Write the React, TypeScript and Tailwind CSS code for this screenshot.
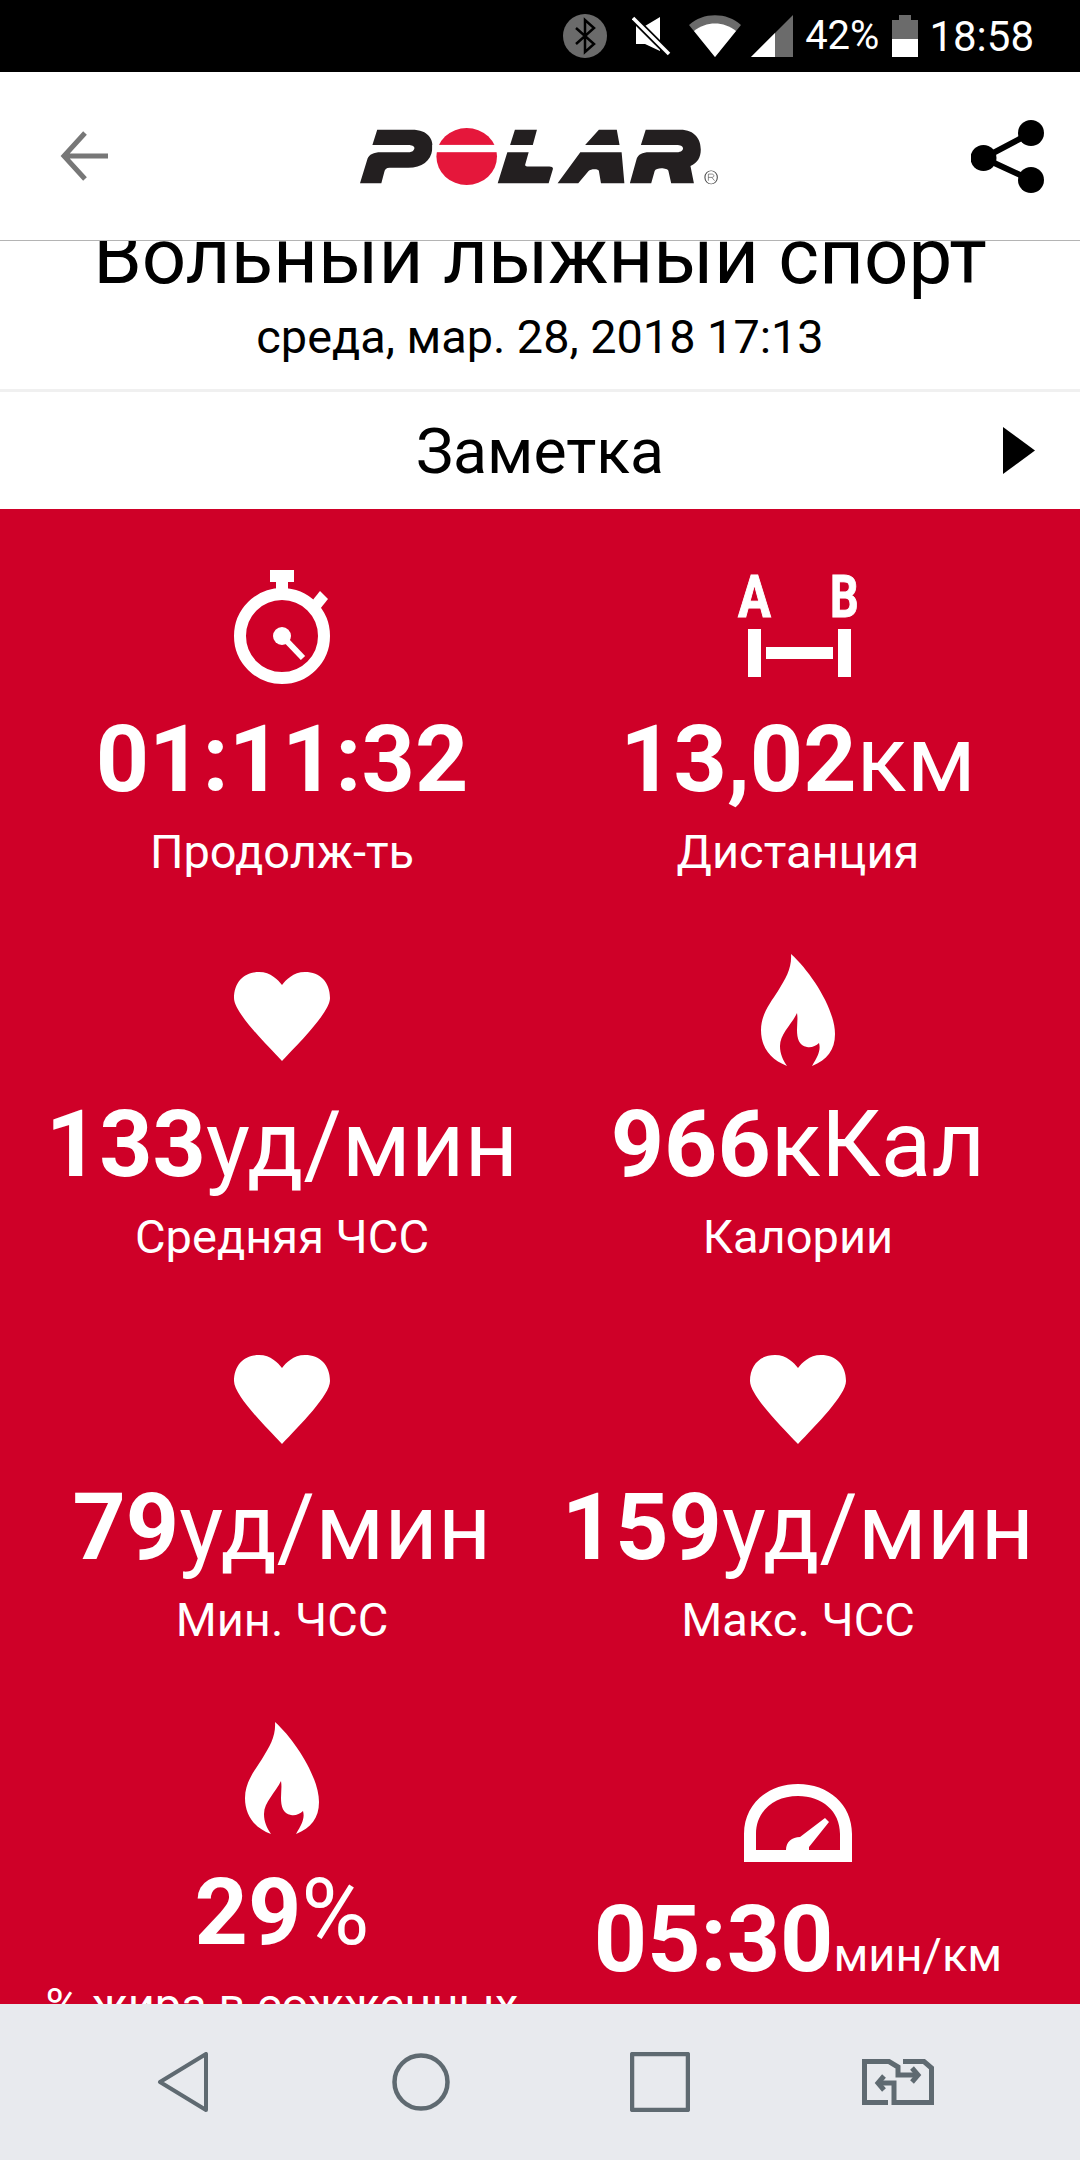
import type { ReactNode } from "react"

function StatusIcons() {
  return (
    <>
      <svg width="44" height="44" viewBox="0 0 44 44" className="mr-[25px]">
        <circle cx="22" cy="22" r="22" fill="#6b6b6b" />
        <path d="M13 14 L31 30 L22 38 V6 L31 14 L13 30" fill="none" stroke="#000" strokeWidth="2.5" />
      </svg>
      <svg width="40" height="40" viewBox="0 0 40 40" className="mr-[17px]">
        <path d="M4 10 H13 L28 1 V35 L13 28 H4 Z" fill="#fff" />
        <path d="M1 2 L37 38" stroke="#000" strokeWidth="7" />
        <path d="M1 2 L37 38" stroke="#fff" strokeWidth="3.5" />
      </svg>
      <svg width="52" height="42" viewBox="0 0 52 42" className="mr-[10px]">
        <path d="M0 10 C14 -3 38 -3 52 10 L26 42 Z" fill="#6b6b6b" />
        <path d="M5 16 C17 6 35 6 47 16 L26 42 Z" fill="#fff" />
      </svg>
      <svg width="42" height="42" viewBox="0 0 42 42" className="mr-[12px]">
        <path d="M0 42 L42 0 V42 Z" fill="#6b6b6b" />
        <path d="M0 42 L24 18 V42 Z" fill="#fff" />
      </svg>
    </>
  )
}

function Battery() {
  return (
    <svg width="26" height="42" viewBox="0 0 26 42" className="ml-[13px] mr-[11px]">
      <path d="M7 0 H19 V5 H26 V42 H0 V5 H7 Z" fill="#6b6b6b" />
      <rect x="0" y="24" width="26" height="18" fill="#fff" />
    </svg>
  )
}

function Logo() {
  return (
    <svg width="358" height="57" viewBox="525 170 520 172" preserveAspectRatio="none" className="-ml-[6px]">
      <g fill="#231f20">
        <path d="M550 175 H600 C625 175 632 205 630 235 C628 270 615 290 595 290 H568 C563 290 561 295 560 305 L556 337 H525 L536 262 C538 250 545 243 555 243 H595 C602 243 604 235 604 230 C604 224 600 221 595 221 H543 Z" />
        <path d="M750 175 H782 L776 221 H743 Z M739 243 H770 L765 280 C764 285 768 287 772 286 H800 C804 286 806 290 805 295 L799 337 H725 Z" />
        <path d="M872 175 H898 L902 221 H852 Z M845 243 H905 L909 337 H875 L872 300 C872 293 860 293 857 300 L842 337 H812 Z" />
        <path d="M940 175 H990 C1012 175 1020 205 1020 235 C1020 260 1015 275 1005 285 L1010 337 H977 L973 300 C972 290 955 288 953 300 L948 337 H917 L927 262 C929 250 935 243 945 243 H985 C992 243 995 235 994 230 C994 224 990 221 985 221 H933 Z" />
      </g>
      <ellipse cx="680" cy="256" rx="44" ry="86" fill="#e5173b" />
      <rect x="630" y="221" width="100" height="22" fill="#fff" />
      <ellipse cx="1035" cy="319" rx="9" ry="20" fill="none" stroke="#444" strokeWidth="1.5" />
      <path d="M1031 329 V309 H1036 C1040 309 1040 319 1036 319 H1031 M1036 319 L1040 329" fill="none" stroke="#444" strokeWidth="1.2" />
    </svg>
  )
}

function Stopwatch() {
  return (
    <svg width="96" height="114" viewBox="0 0 96 114" className="mb-[26px]" fill="#fff">
      <rect x="36" y="0" width="24" height="12" />
      <rect x="42" y="12" width="12" height="8" />
      <path d="M78 31 L86 21 L94 29 L86 39 Z" />
      <circle cx="48" cy="66" r="42" fill="none" stroke="#fff" strokeWidth="12" />
      <circle cx="48" cy="66" r="9" />
      <path d="M48 66 L69 88" stroke="#fff" strokeWidth="6" />
    </svg>
  )
}

function Distance() {
  return (
    <svg width="120" height="102" viewBox="0 0 120 102" className="mb-[33px] overflow-visible" fill="#fff" stroke="#fff" strokeWidth="0">
      <text transform="translate(0 42) scale(0.83 1)" fontFamily="Roboto" fontWeight="700" fontSize="59" strokeWidth="1">A</text>
      <text transform="translate(92 42) scale(0.76 1)" fontFamily="Roboto" fontWeight="700" fontSize="59" strokeWidth="1">B</text>
      <rect x="10" y="54" width="13" height="48" />
      <rect x="28" y="72" width="67" height="12" />
      <rect x="100" y="54" width="13" height="48" />
    </svg>
  )
}

function Heart() {
  return (
    <svg width="96" height="89" viewBox="0 0 96 89" className="mb-[34px]" fill="#fff">
      <path d="M48 89 C30 70 0 40 0 26 C0 10 10 0 25 0 C37 0 44 8 48 13 C52 8 59 0 71 0 C86 0 96 10 96 26 C96 40 66 70 48 89 Z" />
    </svg>
  )
}

function Flame() {
  return (
    <svg width="74" height="112" viewBox="0 0 74 112" className="mb-[29px]" fill="#fff">
      <path d="M30 0 C50 18 74 55 74 80 C74 96 66 106 51 112 C57 102 60 96 58 89 C55 92 50 94 46 93 C38 92 36 84 36 76 C36 70 37 65 36 59 C31 70 19 80 19 92 C19 100 22 106 26 112 C10 106 0 94 0 76 C0 60 10 48 17 37 C25 24 31 14 30 0 Z" />
    </svg>
  )
}

function Gauge() {
  return (
    <svg width="108" height="78" viewBox="0 0 108 78" className="mb-[28px]" fill="#fff">
      <path
        fillRule="evenodd"
        d="M0 78 V50 C0 20 24 0 54 0 C84 0 108 20 108 50 V78 Z M12 66 H42 C42 58 48 53 56 53 L81 34 L85 38 L65 63 V66 H96 V50 C96 27 78 12 54 12 C30 12 12 27 12 50 Z"
      />
    </svg>
  )
}

function Stat({ icon, value, unit, unitClass, label, iconBox }: {
  icon: ReactNode
  value: string
  unit?: string
  unitClass?: string
  label?: string
  iconBox?: string
}) {
  return (
    <div className="flex flex-col items-center">
      <div className={`flex items-end ${iconBox ?? "h-[201px]"}`}>{icon}</div>
      <div className="flex items-baseline whitespace-nowrap h-[100px] leading-[100px]">
        <span className="text-[93px] font-bold">{value}</span>
        {unit && <span className={unitClass ?? "text-[93px]"}>{unit}</span>}
      </div>
      {label && <div className="mt-[17px] text-[47px] leading-[50px] whitespace-nowrap">{label}</div>}
    </div>
  )
}

export default function App() {
  return (
    <div className="flex flex-col h-[2160px] w-[1080px] overflow-hidden bg-white font-['Roboto',sans-serif] text-black">
      <div className="flex items-center justify-end h-[72px] bg-black text-white pr-[46px] text-[40px]">
        <StatusIcons />
        <span>42%</span>
        <Battery />
        <span className="text-[42px]">18:58</span>
      </div>

      <header className="relative z-10 flex items-center justify-between h-[169px] px-[36px] bg-white border-b border-[#b4b4b4]">
        <svg width="60" height="60" viewBox="0 0 60 60" fill="none" stroke="#777" strokeWidth="5" className="ml-[17px]">
          <path d="M55 30 H11 M32 7 L11 30 L32 53" />
        </svg>
        <Logo />
        <svg width="73" height="73" viewBox="0 0 73 73">
          <path d="M60 13 L12.5 38 L60 60" fill="none" stroke="#000" strokeWidth="6" />
          <circle cx="60" cy="13" r="13" />
          <circle cx="12.5" cy="38" r="13" />
          <circle cx="60" cy="60" r="13" />
        </svg>
      </header>

      <div className="flex flex-col flex-1 overflow-hidden">
        <div className="flex flex-col items-center h-[151px] border-b-[3px] border-[#f0f0f0]">
          <div className="-mt-[29px] text-[78px] leading-[90px] whitespace-nowrap">Вольный лыжный спорт</div>
          <div className="mt-[10px] text-[46.8px] leading-[50px] whitespace-nowrap">среда, мар. 28, 2018 17:13</div>
        </div>
        <div className="relative flex items-center justify-center h-[117px] pt-[2px]">
          <span className="text-[62.5px]">Заметка</span>
          <svg width="32" height="47" viewBox="0 0 32 47" className="absolute right-[45px] top-[35px]">
            <path d="M0 0 L32 23.5 L0 47 Z" />
          </svg>
        </div>
        <main className="flex-1 overflow-hidden bg-[#cf0028] text-white px-[24px]">
          <div className="grid grid-cols-2 grid-rows-[385px_383px_385px_385px]">
            <Stat icon={<Stopwatch />} value="01:11:32" label="Продолж-ть" />
            <Stat icon={<Distance />} value="13,02" unit="км" label="Дистанция" />
            <Stat icon={<Heart />} value="133" unit="уд/мин" label="Средняя ЧСС" />
            <Stat icon={<Flame />} value="966" unit="кКал" label="Калории" />
            <Stat icon={<Heart />} value="79" unit="уд/мин" label="Мин. ЧСС" />
            <Stat icon={<Heart />} value="159" unit="уд/мин" label="Макс. ЧСС" />
            <Stat icon={<Flame />} value="29" unit="%" label="% жира в сожженных" />
            <Stat icon={<Gauge />} value="05:30" unit="мин/км" unitClass="text-[47px]" iconBox="h-[228px]" />
          </div>
        </main>
      </div>

      <nav className="relative z-10 flex items-center h-[156px] bg-[#e8eaee] text-[#5f6a71]">
        <svg width="52" height="60" viewBox="0 0 52 60" className="ml-[157px]" fill="none" stroke="#5f6a71" strokeWidth="4" strokeLinejoin="round">
          <path d="M49 2 V58 L3 30 Z" />
        </svg>
        <svg width="58" height="60" viewBox="0 0 58 60" className="ml-[183px]" fill="none" stroke="#5f6a71" strokeWidth="4.5">
          <circle cx="29" cy="30" r="26.5" />
        </svg>
        <svg width="60" height="60" viewBox="0 0 60 60" className="ml-[180px]" fill="none" stroke="#5f6a71" strokeWidth="4.5">
          <rect x="2" y="2" width="56" height="56" rx="1" />
        </svg>
        <svg width="72" height="46" viewBox="0 0 72 46" className="ml-[172px]" fill="none" stroke="#5f6a71" strokeWidth="5">
          <path d="M26 43.5 H2.5 V2.5 H27 L36 8 V16 H54" />
          <path d="M41 2.5 H62 L69.5 9 V43.5 H32 V24 H17" />
          <path d="M50 9 L56 16 L50 23 M22 17 L16 24 L22 31" />
        </svg>
      </nav>
    </div>
  )
}
